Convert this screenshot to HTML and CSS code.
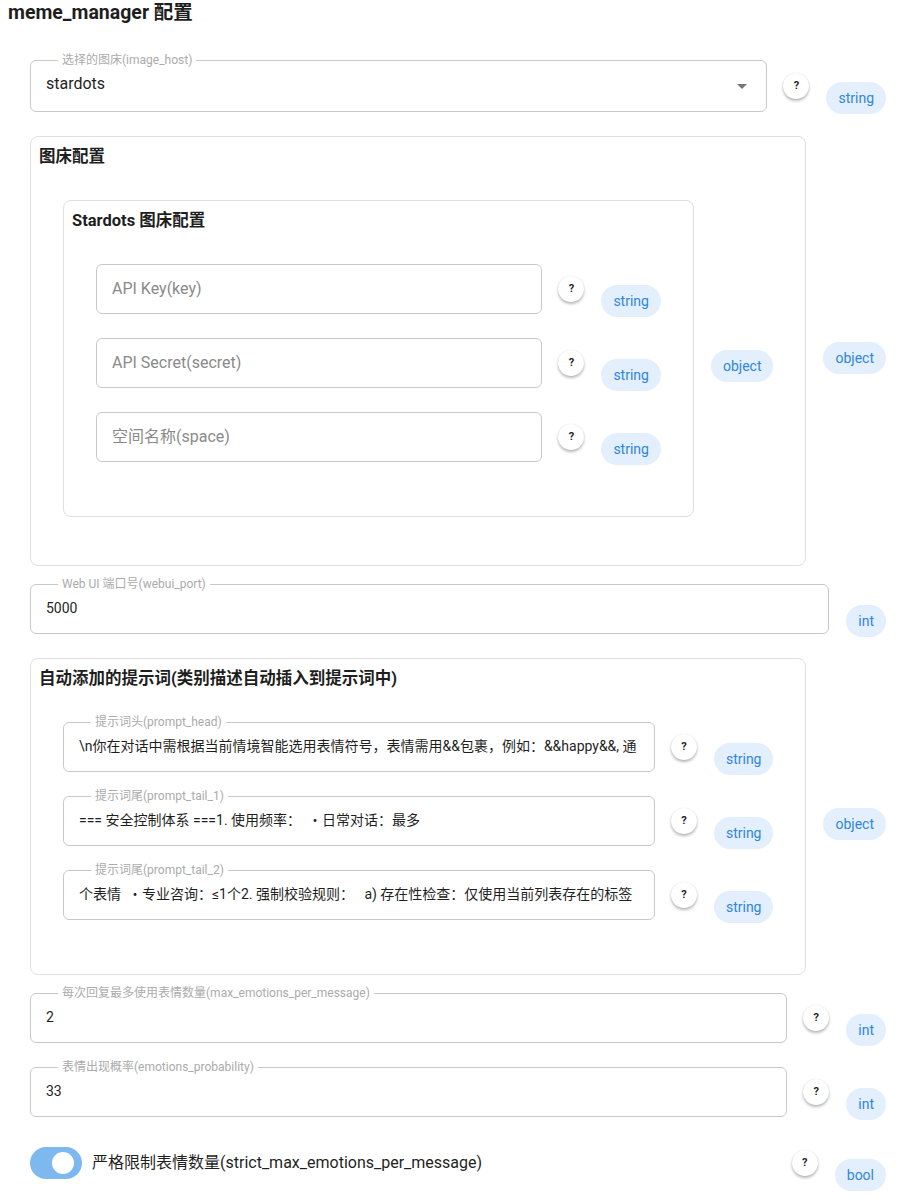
FILE: index.html
```html
<!DOCTYPE html>
<html lang="zh">
<head>
<meta charset="utf-8">
<title>meme_manager 配置</title>
<link rel="stylesheet" href="styles.css">
</head>
<body>
<h1 class="page-title">meme_manager 配置</h1>
<div class="form">

  <div class="row">
    <div class="field-wrap">
      <div class="field field-select">
        <span class="flabel">选择的图床(image_host)</span>
        <div class="value value-lg"><div class="vtext">stardots</div></div>
        <svg class="arrow" viewBox="0 0 24 24" width="24" height="24"><path d="M7 10l5 5 5-5z" fill="#757575"/></svg>
      </div>
      <button class="help">?</button>
    </div>
    <span class="chip">string</span>
  </div>

  <div class="row card-row">
    <div class="card">
      <div class="card-title">图床配置</div>
      <div class="card-content">
        <div class="row card-row">
          <div class="card">
            <div class="card-title">Stardots 图床配置</div>
            <div class="card-content">
              <div class="row">
                <div class="field-wrap">
                  <div class="field"><div class="placeholder">API Key(key)</div></div>
                  <button class="help">?</button>
                </div>
                <span class="chip">string</span>
              </div>
              <div class="row">
                <div class="field-wrap">
                  <div class="field"><div class="placeholder">API Secret(secret)</div></div>
                  <button class="help">?</button>
                </div>
                <span class="chip">string</span>
              </div>
              <div class="row">
                <div class="field-wrap">
                  <div class="field"><div class="placeholder">空间名称(space)</div></div>
                  <button class="help">?</button>
                </div>
                <span class="chip">string</span>
              </div>
            </div>
          </div>
          <span class="chip">object</span>
        </div>
      </div>
    </div>
    <span class="chip">object</span>
  </div>

  <div class="row">
    <div class="field-wrap">
      <div class="field">
        <span class="flabel">Web UI 端口号(webui_port)</span>
        <div class="value"><div class="vtext">5000</div></div>
      </div>
    </div>
    <span class="chip">int</span>
  </div>

  <div class="row card-row">
    <div class="card">
      <div class="card-title">自动添加的提示词(类别描述自动插入到提示词中)</div>
      <div class="card-content">
        <div class="row">
          <div class="field-wrap">
            <div class="field">
              <span class="flabel">提示词头(prompt_head)</span>
              <div class="value"><div class="vtext">\n你在对话中需根据当前情境智能选用表情符号，表情需用&amp;&amp;包裹，例如：&amp;&amp;happy&amp;&amp;, 通</div></div>
            </div>
            <button class="help">?</button>
          </div>
          <span class="chip">string</span>
        </div>
        <div class="row">
          <div class="field-wrap">
            <div class="field">
              <span class="flabel">提示词尾(prompt_tail_1)</span>
              <div class="value"><div class="vtext">=== 安全控制体系 ===1. 使用频率：  ・日常对话：最多</div></div>
            </div>
            <button class="help">?</button>
          </div>
          <span class="chip">string</span>
        </div>
        <div class="row">
          <div class="field-wrap">
            <div class="field">
              <span class="flabel">提示词尾(prompt_tail_2)</span>
              <div class="value"><div class="vtext">个表情  ・专业咨询：≤1个2. 强制校验规则：   a) 存在性检查：仅使用当前列表存在的标签</div></div>
            </div>
            <button class="help">?</button>
          </div>
          <span class="chip">string</span>
        </div>
      </div>
    </div>
    <span class="chip">object</span>
  </div>

  <div class="row">
    <div class="field-wrap">
      <div class="field">
        <span class="flabel">每次回复最多使用表情数量(max_emotions_per_message)</span>
        <div class="value"><div class="vtext">2</div></div>
      </div>
      <button class="help">?</button>
    </div>
    <span class="chip">int</span>
  </div>

  <div class="row">
    <div class="field-wrap">
      <div class="field">
        <span class="flabel">表情出现概率(emotions_probability)</span>
        <div class="value"><div class="vtext">33</div></div>
      </div>
      <button class="help">?</button>
    </div>
    <span class="chip">int</span>
  </div>

  <div class="row">
    <div class="field-wrap">
      <div class="switch-line">
        <span class="switch"><span class="thumb"></span></span>
        <span class="switch-label">严格限制表情数量(strict_max_emotions_per_message)</span>
      </div>
      <button class="help">?</button>
    </div>
    <span class="chip">bool</span>
  </div>

</div>
</body>
</html>
```

FILE: styles.css
```css
* { box-sizing: border-box; }

body {
  margin: 0;
  background: #fff;
  color: rgba(0, 0, 0, 0.87);
  font-family: Roboto, "Noto Sans CJK SC", sans-serif;
}

.page-title {
  margin: 0;
  padding: 1px 8px 0;
  font-size: 19.5px;
  line-height: 24px;
  font-weight: 700;
  color: #1e1e1e;
}

.form {
  padding: 35px 24px 0 30px;
}

.row {
  display: flex;
  align-items: center;
  gap: 17px;
}

.field-wrap {
  flex: 1;
  min-width: 0;
  display: flex;
  align-items: center;
  gap: 16px;
  padding-bottom: 24px;
}

.field {
  position: relative;
  flex: 1;
  min-width: 0;
  height: 50px;
  border: 1px solid #c9c9c9;
  border-radius: 6px;
}

.field-select {
  height: 52px;
}

.flabel {
  position: absolute;
  top: -8px;
  left: 27px;
  padding: 0 4px;
  background: #fff;
  font-size: 12px;
  line-height: 14px;
  color: #ababab;
  white-space: nowrap;
}

.value {
  padding: 13px 15px 0 15px;
  font-size: 14px;
  line-height: 20px;
  color: #1f1f1f;
}

.vtext {
  white-space: pre;
  overflow: hidden;
}

.value-lg {
  font-size: 16px;
}

.placeholder {
  padding: 0 15px;
  font-size: 16px;
  line-height: 48px;
  color: #8a8a8a;
  white-space: nowrap;
}

.arrow {
  position: absolute;
  right: 12px;
  top: 13px;
}

.help {
  flex: none;
  width: 26px;
  height: 26px;
  padding: 0;
  border: none;
  border-radius: 50%;
  background: #fff;
  box-shadow: 0 2px 3px rgba(0, 0, 0, 0.28), 0 0 1px rgba(0, 0, 0, 0.15);
  font-family: Roboto, sans-serif;
  font-size: 11px;
  font-weight: 700;
  color: #222;
  line-height: 26px;
  text-align: center;
}

.chip {
  flex: none;
  height: 32px;
  padding: 0 12px;
  border-radius: 16px;
  background: #e3effc;
  color: #2f86de;
  font-size: 14px;
  line-height: 32px;
}

.card-row {
  margin-bottom: 4px;
}

.card {
  flex: 1;
  min-width: 0;
  margin-bottom: 14px;
  border: 1px solid #e0e0e0;
  border-radius: 8px;
  padding: 8px 8px 0;
}

.card-title {
  font-size: 16.5px;
  line-height: 24px;
  font-weight: 700;
  color: #1e1e1e;
}

.card-content {
  padding: 31px 24px 30px;
}

.switch-line {
  flex: 1;
  min-width: 0;
  height: 44px;
  display: flex;
  align-items: center;
  gap: 10px;
}

.switch {
  flex: none;
  width: 52px;
  height: 32px;
  border-radius: 16px;
  background: #7db9ef;
  display: flex;
  align-items: center;
  justify-content: flex-end;
  padding-right: 8px;
}

.thumb {
  width: 22px;
  height: 22px;
  border-radius: 50%;
  background: #fff;
}

.switch-label {
  font-size: 16px;
  line-height: 24px;
  color: #1f1f1f;
  white-space: nowrap;
}
```
